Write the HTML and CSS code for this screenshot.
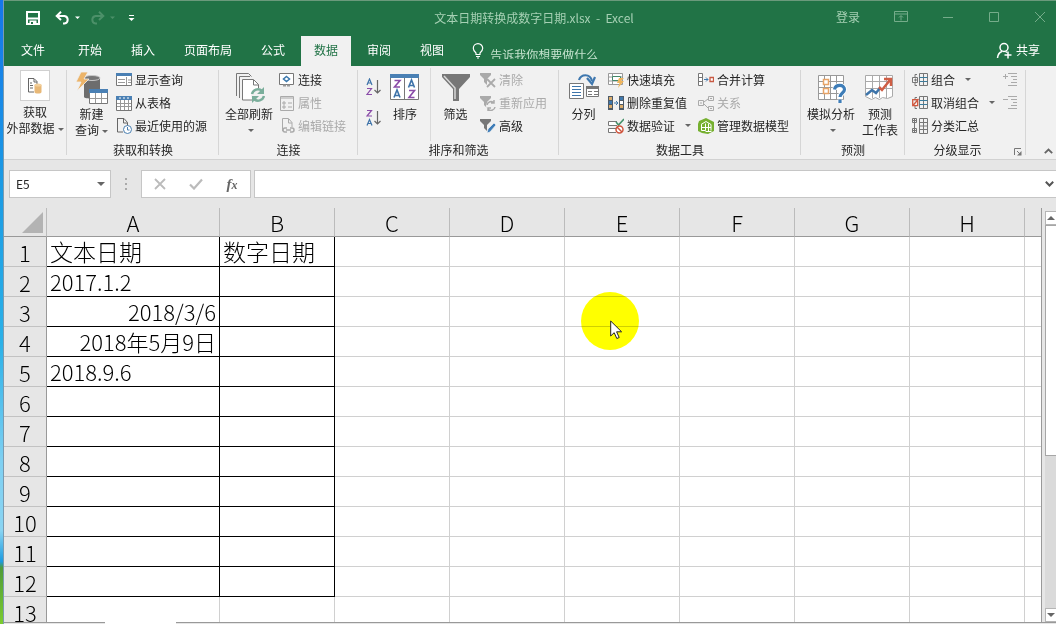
FILE: index.html
```html
<!DOCTYPE html>
<html lang="zh-CN">
<head>
<meta charset="utf-8">
<title>文本日期转换成数字日期.xlsx - Excel</title>
<link rel="stylesheet" href="styles.css">
</head>
<body>
<div class="desktop"></div>
<div class="window">
  <header class="titlebar">
    <div class="quick">
      <button class="save" aria-label="保存"><svg width="14" height="14" viewBox="0 0 14 14"><path d="M0 0h14v14H0zM2 2v4.500h10V2zM2 8.500V12h1.500V9.500h7V12H12V8.500z" fill="#fff" fill-rule="evenodd"/><path d="M5 11h2v2H5z" fill="#217346"/></svg></button>
      <button class="undo" aria-label="撤消"><svg width="25" height="14" viewBox="0 0 25 14"><path d="M2 5h7.500a3.800 3.800 0 0 1 0 7.500H8M6 .8L1.700 5 6 9" fill="none" stroke="#fff" stroke-width="2"/><path d="M20 5.500h5L22.500 8z" fill="#fff"/></svg></button>
      <button class="redo" aria-label="恢复"><svg width="25" height="14" viewBox="0 0 25 14"><path d="M13 5H5.500a3.800 3.800 0 0 0 0 7.500H7M9 .8L13.300 5 9 9" fill="none" stroke="#4c9069" stroke-width="2"/><path d="M20 5.500h5L22.500 8z" fill="#4c9069"/></svg></button>
      <button aria-label="自定义快速访问工具栏"><svg width="7" height="8" viewBox="0 0 7 8"><path d="M1 1.500h5" stroke="#fff"/><path d="M.5 4h6L3.500 7z" fill="#fff"/></svg></button>
    </div>
    <h1 class="doc-title">文本日期转换成数字日期.xlsx&nbsp; -&nbsp; Excel</h1>
    <div class="controls">
      <button class="login">登录</button>
      <button aria-label="功能区显示选项"><svg width="14" height="12" viewBox="0 0 14 12"><path d="M.5.500h13v10H.5zM.5 3h13M7 9.500V5M5 6.500L7 4.500l2 2" fill="none" stroke="#75ac8a"/></svg></button>
      <button aria-label="最小化"><svg width="12" height="12" viewBox="0 0 12 12"><path d="M1 6.500h10" stroke="#75ac8a"/></svg></button>
      <button aria-label="最大化"><svg width="12" height="12" viewBox="0 0 12 12"><path d="M1.500 1.500h9v9h-9z" fill="none" stroke="#75ac8a"/></svg></button>
      <button aria-label="关闭"><svg width="12" height="12" viewBox="0 0 12 12"><path d="M1 1l10 10M11 1L1 11" stroke="#75ac8a"/></svg></button>
    </div>
  </header>

  <nav class="tabs">
    <button class="tab file">文件</button>
    <button class="tab">开始</button>
    <button class="tab">插入</button>
    <button class="tab">页面布局</button>
    <button class="tab">公式</button>
    <button class="tab active">数据</button>
    <button class="tab">审阅</button>
    <button class="tab">视图</button>
    <label class="tell"><svg width="12" height="16" viewBox="0 0 12 16"><path d="M4 11.500V10C2.500 8.800 1.300 7.500 1.300 5.300a4.700 4.700 0 0 1 9.400 0c0 2.200-1.200 3.500-2.700 4.700v1.500zM4 13.500h4M5 15h2" fill="none" stroke="#fff" stroke-width="1.200"/></svg><input aria-label="告诉我你想要做什么" placeholder="告诉我你想要做什么"></label>
    <button class="share"><svg width="17" height="17" viewBox="0 0 17 17"><circle cx="8" cy="5.500" r="4" fill="none" stroke="#fff" stroke-width="1.500"/><path d="M1.500 16c.3-3.500 1.800-5.500 4.500-6.500M9.500 9.500l1.500 1M8.500 13h7M12 9.500v7" fill="none" stroke="#fff" stroke-width="1.500"/></svg>共享</button>
  </nav>

  <section class="ribbon">
    <div class="group">
      <div class="tools">
        <button class="big external"><span class="tile"><svg width="16" height="16" viewBox="0 0 16 16"><path d="M1 .5h6l3 3v3M1.500 1v13H7M7 1v3h3M3 5h2M3 7.500h3M3 10h3" fill="none" stroke="#666"/><path d="M7.500 7v7c0 2 7 2 7 0V7z" fill="#e8b877"/><ellipse cx="11" cy="7" rx="3.500" ry="1.500" fill="#f2cf9b"/></svg></span><span>获取<br>外部数据<i class="arrow"></i></span></button>
      </div>
    </div>

    <div class="group">
      <div class="tools">
        <button class="big query"><svg width="32" height="32" viewBox="0 0 32 32"><path d="M8 5v20c0 2 16 2 16 0V5z" fill="#6d6d6d"/><ellipse cx="16" cy="6" rx="8" ry="2.500" fill="#777" stroke="#c9c9c9"/><path d="M5 0h7L8 7h5L1 19l4-9H0z" fill="#ecb469" stroke="#f0f0f0" stroke-width=".8"/><path d="M13.500 17.500h18v14h-18z" fill="#fff" stroke="#777"/><path d="M13 17h19v4H13z" fill="#4a80b4"/><path d="M14 26.500h17M19.500 21v10M25.500 21v10" stroke="#999"/></svg><span>新建<br>查询<i class="arrow"></i></span></button>
        <div class="stack">
          <button class="cmd"><svg width="16" height="16" viewBox="0 0 16 16"><path d="M.5 1.500h15v12H.5z" fill="#fff" stroke="#777"/><path d="M0 1h16v3H0z" fill="#4a80b4"/><path d="M2 7.500h7M2 10.500h7M10.500 5v8M12 8h3M12 10.500h3" stroke="#999"/></svg>显示查询</button>
          <button class="cmd"><svg width="16" height="16" viewBox="0 0 16 16"><path d="M.5 1.500h15v14H.5z" fill="#fff" stroke="#777"/><path d="M0 1h16v4H0z" fill="#4a80b4"/><path d="M1 8.500h14M1 11.500h14M4.500 5v10M8.500 5v10M12.500 5v10" stroke="#999"/><path d="M3 3h2M7 3h2M11 3h2" stroke="#fff"/></svg>从表格</button>
          <button class="cmd"><svg width="16" height="16" viewBox="0 0 16 16"><path d="M1 .5h7l3.500 4V8M1.500 1v13H7M7.500 1v4h4" fill="none" stroke="#666"/><circle cx="11.500" cy="11.500" r="4" fill="#fff" stroke="#497eb0"/><path d="M11.500 9v3h2" fill="none" stroke="#497eb0"/></svg>最近使用的源</button>
        </div>
      </div>
      <div class="caption">获取和转换</div>
    </div>

    <div class="group">
      <div class="tools">
        <button class="big refresh"><svg width="32" height="32" viewBox="0 0 32 32"><path d="M3.500 24V1.500h12l3 3M6.500 26V4.500H17" fill="none" stroke="#777"/><path d="M9.500 7.500h11l5 5V28h-16z" fill="#fff" stroke="#777"/><path d="M20.500 8v5h5" fill="none" stroke="#777"/><circle cx="25" cy="23" r="7" fill="#f1f1f1"/><path d="M19 22a6 6 0 0 1 10-3M31 24a6 6 0 0 1-10 3" fill="none" stroke="#7aae9b" stroke-width="2.500"/><path d="M31 15v7h-7zM19 31v-7h7z" fill="#7aae9b"/></svg><span>全部刷新</span><i class="arrow below"></i></button>
        <div class="stack">
          <button class="cmd"><svg width="16" height="16" viewBox="0 0 16 16"><path d="M.5 1.500h14v11H.5z" fill="#fff" stroke="#777"/><path d="M7.500 4.500l3 2.500-3 2.500L4.500 7z" fill="none" stroke="#3b78ad" stroke-width="1.500"/><path d="M4 13.500h7" stroke="#999" stroke-width="2" stroke-dasharray="3 1"/></svg>连接</button>
          <button class="cmd" disabled><svg width="16" height="16" viewBox="0 0 16 16"><path d="M1.500 1.500h13v14h-13zM1 3h14" fill="none" stroke="#aaa"/><path d="M4 7h2v2H4zM4 11h2v2H4zM9 8h4M9 12h4" fill="none" stroke="#aaa"/></svg>属性</button>
          <button class="cmd" disabled><svg width="16" height="16" viewBox="0 0 16 16"><path d="M3.500 13V.5h6l3.500 4V9M9.500 1v4H13" fill="none" stroke="#aaa"/><path d="M8 14H6a2 2 0 0 1 0-4h2M11 10h2a2 2 0 0 1 0 4h-2M7 12h5" fill="none" stroke="#aaa" stroke-width="1.500"/></svg>编辑链接</button>
        </div>
      </div>
      <div class="caption">连接</div>
    </div>

    <div class="group">
      <div class="tools">
        <div class="sorts">
          <button aria-label="升序"><svg width="15" height="18" viewBox="0 0 15 18"><path d="M1 7l2.500-6L6 7M2 5h3" fill="none" stroke="#3e73a9" stroke-width="1.200"/><path d="M1 10.500h4.500L1 16.500h5" fill="none" stroke="#8a4ca8" stroke-width="1.200"/><path d="M11.500 2v13M8.500 12l3 3 3-3" fill="none" stroke="#666" stroke-width="1.200"/></svg></button>
          <button aria-label="降序"><svg width="15" height="18" viewBox="0 0 15 18"><path d="M1 1.500h4.500L1 7h5" fill="none" stroke="#8a4ca8" stroke-width="1.200"/><path d="M1 16.500l2.500-6 2.500 6M2 14.500h3" fill="none" stroke="#3e73a9" stroke-width="1.200"/><path d="M11.500 2v13M8.500 12l3 3 3-3" fill="none" stroke="#666" stroke-width="1.200"/></svg></button>
        </div>
        <button class="big sort"><svg width="32" height="32" viewBox="0 0 32 32"><path d="M1.500 2.500h28v25h-28zM15.500 6v21" fill="#fff" stroke="#777"/><path d="M1 2h29v4H1z" fill="#4a80b4"/><path d="M5.500 8.500H11L5.500 15H11M20 18.500h5.500L20 25.500h5.500" fill="none" stroke="#8a4ca8" stroke-width="1.600"/><path d="M5 25.500l3-7.500 3 7.500M6 23.500h4M19.500 15.500l3-7.500 3 7.500M20.500 13.500h4" fill="none" stroke="#3e73a9" stroke-width="1.600"/></svg><span>排序</span></button>
        <button class="big filter"><svg width="32" height="32" viewBox="0 0 32 32"><path d="M2 2h28v3L19 17v12h-6V17L2 5z" fill="#777"/><path d="M4 4l11 12v11" fill="none" stroke="#d8d8d8" stroke-width="1.500"/></svg><span>筛选</span></button>
        <div class="stack">
          <button class="cmd" disabled><svg width="16" height="16" viewBox="0 0 16 16"><path d="M0 1h11v2L7 7v6L4 10V7L0 3z" fill="#aaa"/><path d="M7 7l8 8M15 7l-8 8" stroke="#aaa" stroke-width="1.800"/></svg>清除</button>
          <button class="cmd" disabled><svg width="16" height="16" viewBox="0 0 16 16"><path d="M0 1h11v2L7 7v6L4 10V7L0 3z" fill="#aaa"/><circle cx="11" cy="11" r="5" fill="#f0f0f0"/><path d="M7 10a4 4 0 0 1 7-2M15 12a4 4 0 0 1-7 2M14 5v3h-3M8 16v-3h3" fill="none" stroke="#aaa" stroke-width="1.500"/></svg>重新应用</button>
          <button class="cmd"><svg width="16" height="16" viewBox="0 0 16 16"><path d="M0 1h11v2L7 7v6L4 10V7L0 3z" fill="#777"/><path d="M7 15l1-4 6-6 2 2-6 7z" fill="#3e7db8" stroke="#f0f0f0" stroke-width=".7"/></svg>高级</button>
        </div>
      </div>
      <div class="caption">排序和筛选</div>
    </div>

    <div class="group">
      <div class="tools">
        <button class="big split"><svg width="32" height="32" viewBox="0 0 32 32"><path d="M1.500 11.500h14v15h-14z" fill="#fff" stroke="#777"/><path d="M4 14.500h9M4 17.500h9M4 20.500h9M4 23.500h9" stroke="#3e75aa"/><path d="M18.500 14.500h12v10h-12z" fill="#fff" stroke="#777"/><path d="M18 14h13v3H18z" fill="#777"/><path d="M20 19.500h4M26 19.500h4M20 22.500h4M26 22.500h4" stroke="#777"/><path d="M11 8c2-6 11-7 13 1" fill="none" stroke="#3f78af" stroke-width="2.200"/><path d="M19 6l5 6 3-7" fill="none" stroke="#3f78af" stroke-width="2.200"/></svg><span>分列</span></button>
        <div class="stack middle">
          <button class="cmd"><svg width="16" height="16" viewBox="0 0 16 16"><path d="M.5 1.500h14v11H.5zM.5 5h14M.5 9h14M4.500 1v12" fill="#fff" stroke="#999"/><path d="M4.500 4.500h8v4h-8z" fill="#fff" stroke="#438768"/><path d="M11 6h5l-3 3h3l-6 7 1.500-5H9z" fill="#efb55d"/></svg>快速填充</button>
          <button class="cmd"><svg width="16" height="16" viewBox="0 0 16 16"><path d="M0 1h5v14H0zM11 1h5v14h-5z" fill="#4d5a68"/><path d="M1 2h3v3H1zM1 10h3v3H1zM12 10h3v3h-3z" fill="#d9ac6c"/><path d="M1 6h3v3H1zM12 2h3v3h-3z" fill="#3f78ad"/><path d="M12 6h3v3h-3z" fill="#fff"/><path d="M6 8h4M8 6l2 2-2 2" fill="none" stroke="#3f78ad"/></svg>删除重复值</button>
          <button class="cmd"><svg width="16" height="16" viewBox="0 0 16 16"><path d="M9 3.500H.5v4H9M9 10.500H.5v4H8" fill="#fff" stroke="#777"/><path d="M8 4l2.500 3L16 1" fill="none" stroke="#45916a" stroke-width="1.600"/><circle cx="11.500" cy="11.500" r="3.500" fill="#fff" stroke="#cf553e" stroke-width="1.500"/><path d="M9 9l5 5" stroke="#cf553e" stroke-width="1.500"/></svg>数据验证<i class="arrow far"></i></button>
        </div>
        <div class="stack">
          <button class="cmd"><svg width="16" height="16" viewBox="0 0 16 16"><path d="M.5 1.500h4v12h-4zM.5 5.500h4M.5 9.500h4" fill="#fff" stroke="#777"/><path d="M6 7.500h4M8 5.500l2 2-2 2" fill="none" stroke="#3f78ad"/><path d="M12 5.500h3.500v4H12z" fill="#fff" stroke="#c85a43" stroke-width="1.300"/></svg>合并计算</button>
          <button class="cmd" disabled><svg width="16" height="16" viewBox="0 0 16 16"><path d="M.5 5.500h5v5h-5zM10.500 1.500h5v4h-5zM10.500 11.500h5v4h-5zM6 7l4-3M6 9l4 4M2 8h2M12 3.500h2M12 13.500h2" fill="none" stroke="#aaa"/></svg>关系</button>
          <button class="cmd"><svg width="16" height="16" viewBox="0 0 16 16"><path d="M1 3l7-3 8 4v9l-6 3-6-1-4-2V6z" fill="#76b030"/><path d="M3 6.500l5-3 5 3v6M3.500 6.500v6h4v-7M10.500 5.500v8M4 9.500h9M7.500 13.500h6" fill="none" stroke="#fff"/></svg>管理数据模型</button>
        </div>
      </div>
      <div class="caption">数据工具</div>
    </div>

    <div class="group">
      <div class="tools">
        <button class="big whatif"><svg width="32" height="32" viewBox="0 0 32 32"><path d="M3.500 3.500h25v24h-25zM3.500 9.500h25M3.500 15.500h25M3.500 21.500h25M9.500 3v24M15.500 3v24M21.500 3v24" fill="#fff" stroke="#999"/><path d="M8.500 7.500h5v5h-5zM8.500 16.500h5v5h-5z" fill="#fff" stroke="#e8a467" stroke-width="1.500"/><path d="M19.500 17.500c1-5.500 10-5.500 10 0 0 3.500-4.500 3.500-4.500 7.500M25 27.500v3.500" fill="none" stroke="#fff" stroke-width="5"/><path d="M19.500 17.500c1-5.500 10-5.500 10 0 0 3.500-4.500 3.500-4.500 7.500M25 27.500v3.500" fill="none" stroke="#3e7db8" stroke-width="3.200"/></svg><span>模拟分析</span><i class="arrow below"></i></button>
        <button class="big forecast"><svg width="32" height="32" viewBox="0 0 32 32"><path d="M1.500 3.500h27v21l-5 2-5-1-3 2-4-2-4 2-6-3zM1.500 9.500h27M1.500 16.500h27M8.500 3v23M15.500 3v23M22.500 3v23" fill="#fff" stroke="#aaa"/><path d="M2 23l6-5 4 3 4-5" fill="none" stroke="#3e75aa" stroke-width="2.500"/><path d="M15 15l3 3 8-10M20 7h7v7" fill="none" stroke="#cf5e45" stroke-width="2.500"/></svg><span>预测<br>工作表</span></button>
      </div>
      <div class="caption">预测</div>
    </div>

    <div class="group">
      <div class="tools outline">
        <div class="stack">
          <button class="cmd"><svg width="16" height="16" viewBox="0 0 16 16"><path d="M5 2.500H3v3M5 13.500H3V11M.5 5.500h5v5h-5zM2 8h3M3.500 6.500v3M7.500 1.500h8v12h-8zM11.500 1v13" fill="none" stroke="#777"/><path d="M7.500 5.500h8M7.500 9.500h8" stroke="#3b7b9b"/></svg>组合<i class="arrow far"></i></button>
          <button class="cmd"><svg width="16" height="16" viewBox="0 0 16 16"><path d="M7.500 1.500h8v12h-8zM11.500 1v13M5 2.500H3v3M5 13.500H3V11" fill="none" stroke="#777"/><path d="M7.500 5.500h8M7.500 9.500h8" stroke="#3b7b9b"/><path d="M.7 4.700h5v6h-5zM.5 11l6-7" fill="none" stroke="#cf573e" stroke-width="1.300"/></svg>取消组合<i class="arrow far"></i></button>
          <button class="cmd"><svg width="16" height="16" viewBox="0 0 16 16"><path d="M.5.500h4v4h-4zM.5 10.500h4v4h-4zM1 2.500h3M2.500 1v3M1 12.500h3M2.500 11v3M2.500 5v5M7.500.500h8v15h-8zM7.500 4.500h8M7.500 8h8M7.500 11.500h8M11.500 0v15" fill="none" stroke="#777"/></svg>分类汇总</button>
        </div>
        <div class="details">
          <button disabled aria-label="显示明细数据"><svg width="14" height="14" viewBox="0 0 14 14"><path d="M0 4.500h5M2.500 2v5M5 1.500h9M8 4.500h6M10 7.500h4M8 10.500h6M5 13.500h9" fill="none" stroke="#aaa"/></svg></button>
          <button disabled aria-label="隐藏明细数据"><svg width="14" height="14" viewBox="0 0 14 14"><path d="M0 4.500h5M5 1.500h9M8 4.500h6M10 7.500h4M8 10.500h6M5 13.500h9" fill="none" stroke="#aaa"/></svg></button>
        </div>
      </div>
      <div class="caption launch">分级显示<button aria-label="分级显示设置"><svg width="8" height="8" viewBox="0 0 8 8"><path d="M.5 7V.500H7M3 3l3 3" fill="none" stroke="#777"/><path d="M7.500 3v4.500H3z" fill="#777"/></svg></button></div>
    </div>
    <button class="collapse" aria-label="折叠功能区"><svg width="9" height="6" viewBox="0 0 9 6"><path d="M.8 5.200L4.500 1.500l3.700 3.700" fill="none" stroke="#666" stroke-width="1.800"/></svg></button>
  </section>

  <section class="formula-bar">
    <div class="name-box"><input aria-label="名称框" value="E5"><button aria-label="名称列表"><i class="arrow wide"></i></button></div>
    <span class="dots"><svg width="3" height="12" viewBox="0 0 3 12"><path d="M0 0h2v2H0zM0 5h2v2H0zM0 10h2v2H0z" fill="#aaa"/></svg></span>
    <div class="edit-buttons">
      <button aria-label="取消"><svg width="12" height="12" viewBox="0 0 12 12"><path d="M1 1l10 10M11 1L1 11" stroke="#bbb" stroke-width="1.800"/></svg></button>
      <button aria-label="输入"><svg width="14" height="12" viewBox="0 0 14 12"><path d="M1 6.500l4 4 8-9" fill="none" stroke="#bbb" stroke-width="2.200"/></svg></button>
      <button class="fx" aria-label="插入函数"><i>f</i><i class="sub">x</i></button>
    </div>
    <div class="formula"><input aria-label="编辑栏"><button aria-label="展开编辑栏"><svg width="9" height="6" viewBox="0 0 9 6"><path d="M.8.800L4.500 4.500 8.200.8" fill="none" stroke="#555" stroke-width="2"/></svg></button></div>
  </section>

  <main class="sheet">
    <div class="grid">
      <table>
        <colgroup><col class="c-head"><col class="c-a"><col class="c-std"><col class="c-std"><col class="c-std"><col class="c-std"><col class="c-std"><col class="c-std"><col class="c-std"><col></colgroup>
        <thead><tr><th class="corner"><svg width="21" height="21" viewBox="0 0 21 21"><path d="M21 0v21H0z" fill="#b3b3b3"/></svg></th><th>A</th><th>B</th><th>C</th><th>D</th><th>E</th><th>F</th><th>G</th><th>H</th><th></th></tr></thead>
        <tbody class="boxed">
          <tr><th>1</th><td class="title">文本日期</td><td class="title">数字日期</td><td></td><td></td><td></td><td></td><td></td><td></td><td></td></tr>
          <tr><th>2</th><td>2017.1.2</td><td></td><td></td><td></td><td></td><td></td><td></td><td></td><td></td></tr>
          <tr><th>3</th><td class="date">2018/3/6</td><td></td><td></td><td></td><td></td><td></td><td></td><td></td><td></td></tr>
          <tr><th>4</th><td class="date">2018年5月9日</td><td></td><td></td><td></td><td></td><td></td><td></td><td></td><td></td></tr>
          <tr><th>5</th><td>2018.9.6</td><td></td><td></td><td></td><td></td><td></td><td></td><td></td><td></td></tr>
          <tr><th>6</th><td></td><td></td><td></td><td></td><td></td><td></td><td></td><td></td><td></td></tr>
          <tr><th>7</th><td></td><td></td><td></td><td></td><td></td><td></td><td></td><td></td><td></td></tr>
          <tr><th>8</th><td></td><td></td><td></td><td></td><td></td><td></td><td></td><td></td><td></td></tr>
          <tr><th>9</th><td></td><td></td><td></td><td></td><td></td><td></td><td></td><td></td><td></td></tr>
          <tr><th>10</th><td></td><td></td><td></td><td></td><td></td><td></td><td></td><td></td><td></td></tr>
          <tr><th>11</th><td></td><td></td><td></td><td></td><td></td><td></td><td></td><td></td><td></td></tr>
          <tr><th>12</th><td></td><td></td><td></td><td></td><td></td><td></td><td></td><td></td><td></td></tr>
        </tbody>
        <tbody>
          <tr><th>13</th><td></td><td></td><td></td><td></td><td></td><td></td><td></td><td></td><td></td></tr>
        </tbody>
      </table>
      <div class="spotlight"></div>
      <svg class="pointer" width="13" height="20" viewBox="0 0 13 20"><path d="M.7 1v15l3.500-3.300L6.800 18.500l2.400-1-2.600-5.700h5z" fill="#fff" stroke="#222"/></svg>
    </div>
    <div class="scroll">
      <button aria-label="向上滚动"><i class="arrow up"></i></button>
      <div class="thumb"></div>
      <div class="track"></div>
      <button aria-label="向下滚动"><i class="arrow wide"></i></button>
    </div>
  </main>
  <footer class="sheet-tabs"><span></span></footer>
</div>
</body>
</html>
```

FILE: styles.css
```css
* { box-sizing: border-box; }

body {
  margin: 0;
  height: 100vh;
  display: flex;
  overflow: hidden;
  font: 12px/16px "Noto Sans CJK SC", sans-serif;
  color: #262626;
}

button, input {
  font: inherit;
  color: inherit;
  background: none;
  border: 0;
  padding: 0;
  margin: 0;
  outline: 0;
}

svg { display: block; flex: none; }

.desktop {
  width: 4px;
  flex: none;
  border-right: 1px solid #7a9bb0;
  background: linear-gradient(#1677ea, #1b9be4 30%, #2bb1e8 55%, #7fd0f2 74%, #8ad4f2 85%, #1b9be0 90%, #4f9c3a 91%, #7ccc30);
}

.window {
  flex: 1;
  min-width: 0;
  display: flex;
  flex-direction: column;
  background: #e6e6e6;
}

/* Title bar */
.titlebar {
  height: 36px;
  flex: none;
  display: flex;
  align-items: center;
  padding-bottom: 2px;
  background: #217346;
  border-top: 1px solid #6b9a7c;
}
.quick, .controls { flex: 1; display: flex; align-items: center; }
.quick { padding-left: 22px; }
.save { margin-right: 15px; }
.undo { margin-right: 10px; }
.redo { margin-right: 13px; }
.doc-title { margin: 0 4px 0 0; font-size: 12px; font-weight: 400; color: #a6d0b4; }
.controls { justify-content: flex-end; gap: 34px; padding: 0 10px 2px 0; }
.login { color: #a6d0b4; }

/* Ribbon tabs */
.tabs {
  height: 30px;
  flex: none;
  display: flex;
  gap: 3px;
  padding: 0 16px 0 4px;
  background: #217346;
  color: #fff;
}
.tab { padding: 0 13px 2px; }
.file { margin-right: 4px; }
.active { background: #f1f1f1; color: #217346; }
.tell { display: flex; align-items: flex-start; gap: 6px; padding: 7px 0 0 12px; }
.tell input { width: 120px; height: 10px; margin-top: 6px; line-height: 10px; overflow: hidden; }
.tell input::placeholder { color: #c3e2cd; opacity: 1; }
.share { display: flex; align-items: center; gap: 3px; margin-left: auto; padding-bottom: 2px; }

/* Ribbon */
.ribbon {
  flex: none;
  display: grid;
  grid-template-columns: 63px 152px 139px 201px 242px 104px 121px 1fr;
  height: 94px;
  background: #f1f1f1;
  border-bottom: 1px solid #d2d2d2;
}
.group { display: flex; flex-direction: column; position: relative; min-width: 0; }
.group::after {
  content: "";
  position: absolute;
  right: 0;
  top: 4px;
  bottom: 4px;
  border-right: 1px solid #d6d6d6;
}
.tools { display: flex; height: 75px; padding-top: 2px; }
.caption { height: 18px; line-height: 18px; text-align: center; }
.launch { display: flex; justify-content: center; padding-right: 16px; position: relative; }
.launch button { position: absolute; right: 4px; top: 7px; }

.big {
  flex: none;
  display: flex;
  flex-direction: column;
  align-items: center;
  gap: 2px;
  padding-top: 4px;
  white-space: nowrap;
}
.external { width: 62px; padding-top: 2px; gap: 3px; }
.tile {
  width: 30px;
  height: 31px;
  display: grid;
  place-items: center;
  background: #fff;
  border: 1px solid #d0d0d0;
}
.query { width: 49px; }
.refresh { width: 60px; }
.sort { width: 50px; }
.filter { width: 50px; border-left: 1px solid #dadada; }
.split { width: 49px; }
.whatif { width: 60px; }
.forecast { width: 38px; }

.arrow {
  display: inline-block;
  border: 3px solid transparent;
  border-top-color: #666;
  border-bottom: 0;
  margin-left: 3px;
  vertical-align: middle;
}
.below { margin: 5px 0 0 4px; }
.far { margin-left: 7px; }
.wide { border-width: 4px 4px 0; margin: 0; }
.up { border: 4px solid transparent; border-top: 0; border-bottom-color: #666; margin: 0; }

.stack { display: flex; flex-direction: column; }
.middle { width: 90px; }
.cmd { display: flex; align-items: center; gap: 3px; height: 23px; white-space: nowrap; }
.cmd:disabled { color: #aaa; }
.sorts { display: flex; flex-direction: column; gap: 13px; padding: 10px 0 0 8px; width: 22px; }
.outline { padding-left: 7px; padding-right: 9px; justify-content: space-between; }
.details { display: flex; flex-direction: column; gap: 9px; padding-top: 4px; }
.collapse { align-self: end; justify-self: end; padding: 0 3px 5px 0; }

/* Formula bar */
.formula-bar { flex: none; display: flex; height: 48px; padding: 10px 0; }
.name-box, .edit-buttons, .formula { display: flex; align-items: center; background: #fff; border: 1px solid #c6c6c6; }
.name-box { width: 102px; margin-left: 5px; padding: 0 5px 0 6px; }
.name-box input { flex: 1; min-width: 0; }
.name-box button { padding-bottom: 4px; }
.dots { width: 30px; display: grid; place-items: center; }
.edit-buttons { width: 110px; }
.edit-buttons button { flex: 1; display: flex; justify-content: center; align-items: center; }
.fx { font: bold 15px/16px "Liberation Serif", serif; color: #666; }
.sub { font-size: 12px; padding-top: 2px; }
.formula { flex: 1; margin-left: 3px; border-right: 0; padding-right: 2px; }
.formula input { flex: 1; min-width: 0; }

/* Sheet */
.sheet { flex: 1; min-height: 0; display: flex; gap: 3px; }
.grid { flex: 1; min-width: 0; position: relative; overflow: hidden; border-right: 1px solid #999; }
table { width: 100%; table-layout: fixed; border-collapse: separate; border-spacing: 0; font-size: 22px; line-height: 28px; color: #000; }
.c-head { width: 43px; }
.c-a { width: 173px; }
.c-std { width: 115px; }
th {
  padding: 0;
  font-weight: 300;
  background: #e6e6e6;
  border-right: 1px solid #999;
  border-bottom: 1px solid #c2c2c2;
}
thead th { height: 29px; border-bottom-color: #999; border-right-color: #bbb; }
thead th:last-child { border-right: 0; }
.corner svg { margin: 4px 3px 3px auto; }
tbody th { height: 30px; }
td {
  padding: 0 3px 1px;
  font-weight: 300;
  background: #fff;
  border-right: 1px solid #d0d0d0;
  border-bottom: 1px solid #d0d0d0;
  white-space: nowrap;
}
td:last-child { border-right: 0; }
.boxed td:nth-child(-n+3) { border-color: #000; }
.title { font-size: 23px; }
.date { text-align: right; }

/* Mouse highlight */
.spotlight {
  position: absolute;
  left: 577px;
  top: 84px;
  width: 58px;
  height: 58px;
  border-radius: 50%;
  background: #ff0;
  mix-blend-mode: multiply;
}
.pointer { position: absolute; left: 606px; top: 112px; }

.scroll { width: 11px; flex: none; display: flex; flex-direction: column; padding-top: 3px; }
.scroll button { height: 14px; background: #fff; border: 1px solid #b5b5b5; border-right: 0; display: grid; place-items: center; }
.thumb { flex: 3; background: #fff; border: 1px solid #a6a6a6; border-right: 0; }
.track { flex: 2; background: #dadada; }

.sheet-tabs { flex: none; height: 2px; border-top: 1px solid #999; padding-left: 101px; }
.sheet-tabs span { display: block; width: 71px; height: 2px; margin-top: -1px; background: #fff; }
```
